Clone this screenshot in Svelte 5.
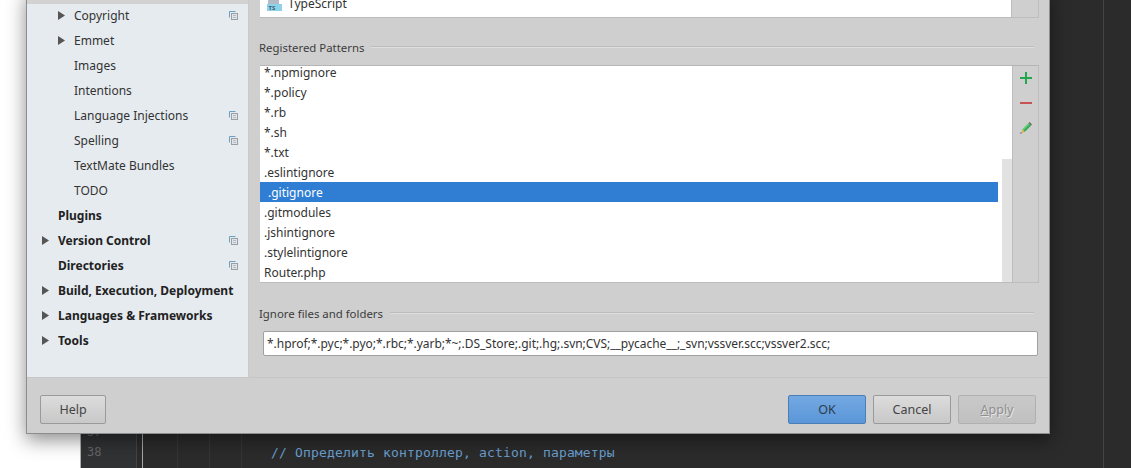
<script>
	const settings = [
		{ label: 'Copyright', arrow: true, copy: true },
		{ label: 'Emmet', arrow: true },
		{ label: 'Images' },
		{ label: 'Intentions' },
		{ label: 'Language Injections', copy: true },
		{ label: 'Spelling', copy: true },
		{ label: 'TextMate Bundles' },
		{ label: 'TODO' }
	];
	const sections = [
		{ label: 'Plugins' },
		{ label: 'Version Control', arrow: true, copy: true },
		{ label: 'Directories', copy: true },
		{ label: 'Build, Execution, Deployment', arrow: true },
		{ label: 'Languages & Frameworks', arrow: true },
		{ label: 'Tools', arrow: true }
	];
	const patterns = [
		'*.npmignore', '*.policy', '*.rb', '*.sh', '*.txt', '.eslintignore',
		'.gitignore', '.gitmodules', '.jshintignore', '.stylelintignore', 'Router.php'
	];
	const guides = [177, 209, 241];
</script>

{#snippet copyIcon()}
	<svg class="copy" width="9" height="9" viewBox="0 0 9 9">
		<path d="M.5 6.5V.5h6" fill="none" stroke="#6f9fc0" />
		<rect x="2.5" y="2.5" width="6" height="6" fill="#dfe5ea" stroke="#9a9fa4" />
		<path d="M4 4.5h3M4 6.5h3" stroke="#b5bbc0" />
	</svg>
{/snippet}

{#snippet arrowIcon()}
	<svg class="arrow" width="7" height="9" viewBox="0 0 7 9"><path d="M0 0l7 4.5L0 9z" fill="#555" /></svg>
{/snippet}

<div class="screen">
	<div class="editor">
		<div class="gutter">
			<span class="lineno prev">37</span>
			<span class="lineno">38</span>
		</div>
		<div class="caret-line"></div>
		{#each guides as x}
			<div class="guide" style="left: {x - 81}px"></div>
		{/each}
		<div class="code">// Определить контроллер, action, параметры</div>
		<div class="margin-line"></div>
	</div>

	<div class="dialog">
		<div class="body">
			<nav class="sidebar">
				<div class="current"></div>
				{#each settings as item}
					<div class="row child">
						<span class="twisty">{#if item.arrow}{@render arrowIcon()}{/if}</span>
						<span class="name">{item.label}</span>
						{#if item.copy}{@render copyIcon()}{/if}
					</div>
				{/each}
				{#each sections as item}
					<div class="row section">
						<span class="twisty">{#if item.arrow}{@render arrowIcon()}{/if}</span>
						<span class="name">{item.label}</span>
						{#if item.copy}{@render copyIcon()}{/if}
					</div>
				{/each}
			</nav>

			<main class="content">
				<div class="types">
					<div class="types-list">
						<div class="type-row">
							<svg width="15" height="16" viewBox="0 0 15 16">
								<rect x="1" y="0" width="11" height="6" fill="#b3bcc6" />
								<rect x="0" y="6" width="15" height="7" fill="#8cd3ea" />
								<text x="1.5" y="12" class="ts">TS</text>
							</svg>
							<span>TypeScript</span>
						</div>
					</div>
					<div class="types-side"></div>
				</div>

				<div class="legend"><span>Registered Patterns</span><i></i></div>

				<div class="patterns">
					<div class="pattern-list">
						<div class="rows">
							{#each patterns as p}
								<div class="pattern" class:selected={p === '.gitignore'}>{p}</div>
							{/each}
						</div>
						<div class="scroll"><div class="thumb"></div></div>
					</div>
					<div class="tools">
						<svg width="12" height="12" viewBox="0 0 12 12"><path d="M5 0h2v5h5v2H7v5H5V7H0V5h5z" fill="#22a84c" /></svg>
						<svg width="12" height="12" viewBox="0 0 12 12"><rect y="5" width="12" height="2" fill="#c75450" /></svg>
						<svg width="12" height="12" viewBox="0 0 12 12">
							<path d="M2 7.5L8.5 1l2.5 2.5L4.500 10z" fill="#62cf78" />
							<path d="M4 8l5.500-5.500 1.500 1L4.500 10z" fill="#38a552" />
							<path d="M8.500 1L9.500 0 12 2.500 11 3.500z" fill="#666" />
							<path d="M2 7.500L4.500 10 2 11z" fill="#f0a840" />
							<path d="M0 12l2-1-1-1z" fill="#555" />
						</svg>
					</div>
				</div>

				<div class="legend ignore"><span>Ignore files and folders</span><i></i></div>
				<div class="field">*.hprof;*.pyc;*.pyo;*.rbc;*.yarb;*~;.DS_Store;.git;.hg;.svn;CVS;__pycache__;_svn;vssver.scc;vssver2.scc;</div>
			</main>
		</div>

		<footer class="footer">
			<button class="btn">Help</button>
			<div class="actions">
				<button class="btn primary">OK</button>
				<button class="btn">Cancel</button>
				<button class="btn disabled"><u>A</u>pply</button>
			</div>
		</footer>
	</div>
</div>

<style>
	:global(body) {
		margin: 0;
		background: #fff;
	}

	.screen {
		position: relative;
		width: 1131px;
		height: 468px;
		overflow: hidden;
		font-family: "Noto Sans", "Open Sans", sans-serif;
		font-size: 12px;
		color: #333;
	}

	.editor {
		position: absolute;
		left: 80px;
		top: 0;
		right: 0;
		bottom: 0;
		background: #2b2b2b;
		border-left: 1px solid #b0b0b0;
	}

	.gutter {
		position: absolute;
		left: 0;
		top: 0;
		bottom: 0;
		width: 55px;
		border-right: 1px solid #454545;
		background: #303234;
	}

	.lineno {
		position: absolute;
		left: 6px;
		top: 445px;
		font-family: "DejaVu Sans Mono", monospace;
		font-size: 12px;
		color: #666;
	}

	.lineno.prev {
		top: 425px;
	}

	.caret-line {
		position: absolute;
		left: 61px;
		top: 0;
		bottom: 0;
		width: 1px;
		background: #a8a8a8;
	}

	.guide {
		position: absolute;
		top: 0;
		bottom: 0;
		width: 1px;
		background: #363636;
	}

	.code {
		position: absolute;
		left: 190px;
		top: 445px;
		font-family: "DejaVu Sans Mono", monospace;
		font-size: 13px;
		letter-spacing: 0.17px;
		color: #6a9fd0;
		white-space: pre;
	}

	.margin-line {
		position: absolute;
		left: 1022px;
		top: 0;
		bottom: 0;
		width: 1px;
		background: #444;
	}

	.dialog {
		position: absolute;
		left: 26px;
		top: -10px;
		width: 1024px;
		height: 444px;
		display: flex;
		flex-direction: column;
		background: #cfcfcf;
		border: 1px solid #8d8d8d;
		border-top: 0;
		box-sizing: border-box;
		box-shadow: 0 6px 18px rgba(0, 0, 0, 0.45);
	}

	.body {
		flex: 1;
		display: flex;
		min-height: 0;
	}

	.sidebar {
		width: 221px;
		background: #e6ebf0;
		border-right: 1px solid #c9c9c9;
	}

	.current {
		height: 14px;
		margin-bottom: -1px;
		background: #d2d2d2;
	}

	.row {
		height: 25px;
		display: flex;
		align-items: center;
		padding-right: 9px;
	}

	.child .twisty {
		margin-left: 31px;
	}

	.section .twisty {
		margin-left: 15px;
	}

	.twisty {
		width: 16px;
		display: flex;
		flex-shrink: 0;
	}

	.name {
		flex: 1;
		white-space: nowrap;
	}

	.section .name {
		font-weight: 700;
		color: #222;
	}

	.arrow {
		display: block;
		margin-top: -1px;
	}

	.copy {
		flex-shrink: 0;
		margin-right: 1px;
	}

	.content {
		flex: 1;
		min-width: 0;
		padding: 0 10px 0 11px;
	}

	.types {
		display: flex;
		height: 27px;
		border-bottom: 1px solid #bdbdbd;
		border-right: 1px solid #bdbdbd;
	}

	.types-list {
		flex: 1;
		background: #fff;
		display: flex;
		align-items: flex-end;
	}

	.type-row {
		display: flex;
		align-items: flex-end;
		gap: 6px;
		padding-left: 7px;
		height: 22px;
		line-height: 20px;
		margin-bottom: 3px;
	}

	.ts {
		font-family: "Noto Sans", sans-serif;
		font-size: 6px;
		font-weight: 700;
		fill: #3f5f70;
	}

	.types-side {
		width: 26px;
		border-left: 1px solid #bdbdbd;
	}

	.legend {
		display: flex;
		align-items: center;
		gap: 7px;
		height: 18px;
		margin: 20px 5px 9px -1px;
		font-size: 11.4px;
		color: #3c3c3c;
	}

	.legend i {
		flex: 1;
		height: 2px;
		background: linear-gradient(#bcbcbc 50%, #dedede 50%);
	}

	.patterns {
		display: flex;
		height: 216px;
		border: 1px solid #bdbdbd;
		border-left: 0;
		border-top-color: #b5b5b5;
	}

	.pattern-list {
		flex: 1;
		display: flex;
		background: #fff;
		overflow: hidden;
	}

	.rows {
		flex: 1;
		margin-top: -4px;
	}

	.pattern {
		height: 20px;
		line-height: 22px;
		padding-left: 4px;
		white-space: nowrap;
	}

	.pattern.selected {
		background: #2f7ed4;
		color: #fff;
		padding-left: 8px;
	}

	.scroll {
		width: 14px;
		position: relative;
		background: #fff;
	}

	.thumb {
		position: absolute;
		left: 4px;
		top: 93px;
		bottom: 0;
		width: 10px;
		background: #e2e2e2;
	}

	.tools {
		width: 25px;
		flex-shrink: 0;
		border-left: 1px solid #bdbdbd;
		display: flex;
		flex-direction: column;
		align-items: center;
		gap: 13px;
		padding-top: 6px;
	}

	.tools svg {
		display: block;
	}

	.legend.ignore {
		margin-top: 21px;
	}

	.field {
		height: 23px;
		line-height: 23px;
		margin: 0 1px 0 3px;
		padding-left: 3px;
		background: #fff;
		border: 1px solid #a0a0a0;
		border-radius: 2px;
		letter-spacing: -0.03px;
		white-space: nowrap;
		overflow: hidden;
	}

	.footer {
		height: 56px;
		flex-shrink: 0;
		display: flex;
		justify-content: space-between;
		align-items: flex-start;
		padding: 17px 13px 0;
		border-top: 1px solid #c6c6c6;
		box-sizing: border-box;
	}

	.actions {
		display: flex;
		gap: 7px;
	}

	.btn {
		width: 78px;
		height: 29px;
		padding: 0;
		font: inherit;
		font-size: 12.5px;
		color: #444;
		background: linear-gradient(#dcdcdc, #c8c8c8);
		border: 1px solid #9a9a9a;
		border-radius: 2px;
	}

	.footer > .btn {
		width: 66px;
	}

	.primary {
		background: linear-gradient(#74a9e2, #5a96d8);
		border-color: #4a7eb6;
		color: #2c3c4c;
	}

	.disabled {
		background: linear-gradient(#c9c9c9, #c0c0c0);
		border-color: #b0b0b0;
		color: #8f8f8f;
		text-shadow: 1px 1px 0 #e6e6e6;
	}
</style>
